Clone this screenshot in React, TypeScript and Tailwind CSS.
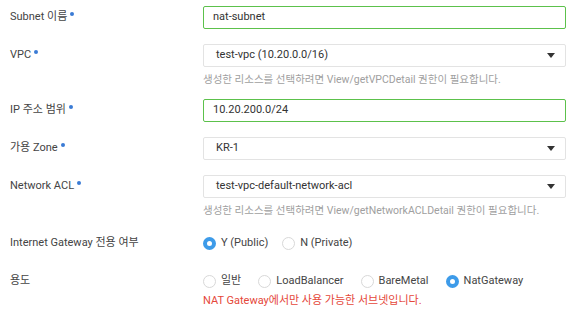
import React from "react";

const font = { fontFamily: "Roboto, 'Noto Sans CJK KR', sans-serif" };

function Required() {
  return <span className="ml-[3px] inline-block h-[4px] w-[4px] -translate-y-[4px] rounded-full bg-[#3a7bd5]" />;
}

function Label({ text, required }: { text: string; required?: boolean }) {
  return (
    <div className="flex h-[23px] w-[203px] shrink-0 items-center pl-[10px] text-[11px] text-[#444]">
      <span>{text}</span>
      {required && <Required />}
    </div>
  );
}

function TextInput({ value }: { value: string }) {
  return (
    <div className="flex h-[23px] w-[363px] items-center rounded-[2px] border border-[#5cc14b] px-[9px] text-[11px] text-[#333]">
      {value}
    </div>
  );
}

function Select({ value }: { value: string }) {
  return (
    <div className="flex h-[23px] w-[363px] items-center justify-between rounded-[2px] border border-[#e3e3e3] pl-[12px] pr-[10px] text-[11px] text-[#333]">
      <span>{value}</span>
      <svg width="8" height="5" viewBox="0 0 8 5">
        <path d="M0 0 H8 L4 5 Z" fill="#333" />
      </svg>
    </div>
  );
}

function Help({ text }: { text: string }) {
  return <div className="mt-[6px] h-[14px] text-[10.5px] leading-[14px] text-[#a0a0a0]">{text}</div>;
}

function Radio({ label, checked }: { label: string; checked?: boolean }) {
  return (
    <div className="flex items-center">
      {checked ? (
        <span className="box-border h-[13px] w-[13px] rounded-full border-[4px] border-[#3d9be9] bg-white" />
      ) : (
        <span className="box-border h-[13px] w-[13px] rounded-full border border-[#d8d8d8] bg-white" />
      )}
      <span className="ml-[5px] text-[11px] text-[#444]">{label}</span>
    </div>
  );
}

export default function App() {
  return (
    <div className="h-[311px] w-[573px] bg-white pt-[6px]" style={font}>
      <div className="mb-[15px] flex">
        <Label text="Subnet 이름" required />
        <TextInput value="nat-subnet" />
      </div>

      <div className="mb-[12px] flex">
        <Label text="VPC" required />
        <div>
          <Select value="test-vpc (10.20.0.0/16)" />
          <Help text="생성한 리소스를 선택하려면 View/getVPCDetail 권한이 필요합니다." />
        </div>
      </div>

      <div className="mb-[15px] flex">
        <Label text="IP 주소 범위" required />
        <TextInput value="10.20.200.0/24" />
      </div>

      <div className="mb-[15px] flex">
        <Label text="가용 Zone" required />
        <Select value="KR-1" />
      </div>

      <div className="mb-[14px] flex">
        <Label text="Network ACL" required />
        <div>
          <Select value="test-vpc-default-network-acl" />
          <Help text="생성한 리소스를 선택하려면 View/getNetworkACLDetail 권한이 필요합니다." />
        </div>
      </div>

      <div className="mb-[15px] flex">
        <Label text="Internet Gateway 전용 여부" />
        <div className="flex h-[23px] items-center gap-[14px]">
          <Radio label="Y (Public)" checked />
          <Radio label="N (Private)" />
        </div>
      </div>

      <div className="flex">
        <Label text="용도" />
        <div>
          <div className="flex h-[23px] items-center gap-[17px]">
            <Radio label="일반" />
            <Radio label="LoadBalancer" />
            <Radio label="BareMetal" />
            <Radio label="NatGateway" checked />
          </div>
          <div className="mt-[1px] text-[11px] leading-[14px] text-[#e5473a]">
            NAT Gateway에서만 사용 가능한 서브넷입니다.
          </div>
        </div>
      </div>
    </div>
  );
}
